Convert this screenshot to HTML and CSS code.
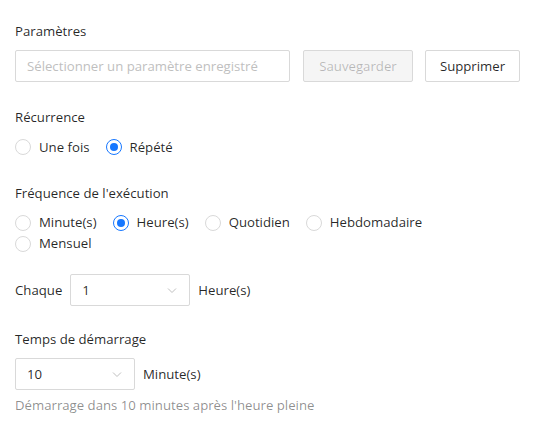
FILE: index.html
```html
<!DOCTYPE html>
<html lang="fr">
<head>
<meta charset="utf-8">
<title>Paramètres</title>
<link rel="stylesheet" href="styles.css">
</head>
<body>
<form class="form">
  <div class="item">
    <div class="label">Paramètres</div>
    <div class="param-row">
      <div class="input placeholder">Sélectionner un paramètre enregistré</div>
      <button type="button" class="btn btn-disabled btn-save">Sauvegarder</button>
      <button type="button" class="btn btn-delete">Supprimer</button>
    </div>
  </div>

  <div class="item">
    <div class="label">Récurrence</div>
    <div class="radio-group">
      <label class="radio"><span class="circle"></span><span class="radio-text">Une fois</span></label>
      <label class="radio"><span class="circle checked"></span><span class="radio-text">Répété</span></label>
    </div>
  </div>

  <div class="item item-freq">
    <div class="label">Fréquence de l'exécution</div>
    <div class="radio-group radio-group-wrap">
      <label class="radio"><span class="circle"></span><span class="radio-text">Minute(s)</span></label>
      <label class="radio"><span class="circle checked"></span><span class="radio-text">Heure(s)</span></label>
      <label class="radio"><span class="circle"></span><span class="radio-text">Quotidien</span></label>
      <label class="radio"><span class="circle"></span><span class="radio-text">Hebdomadaire</span></label>
      <label class="radio"><span class="circle"></span><span class="radio-text">Mensuel</span></label>
    </div>
  </div>

  <div class="item item-every">
    <div class="inline-row">
      <span class="inline-text">Chaque</span>
      <div class="select">
        <span class="select-value">1</span>
        <svg class="arrow" width="12" height="12" viewBox="0 0 12 12"><polyline points="2,4.5 6,8.5 10,4.5" fill="none" stroke="#bfbfbf" stroke-width="1"/></svg>
      </div>
      <span class="inline-text">Heure(s)</span>
    </div>
  </div>

  <div class="item">
    <div class="label">Temps de démarrage</div>
    <div class="inline-row inline-row-start">
      <div class="select">
        <span class="select-value">10</span>
        <svg class="arrow" width="12" height="12" viewBox="0 0 12 12"><polyline points="2,4.5 6,8.5 10,4.5" fill="none" stroke="#bfbfbf" stroke-width="1"/></svg>
      </div>
      <span class="inline-text">Minute(s)</span>
    </div>
    <div class="help">Démarrage dans 10 minutes après l'heure pleine</div>
  </div>
</form>
</body>
</html>
```

FILE: styles.css
```css
* { box-sizing: border-box; }

html, body {
  margin: 0;
  padding: 0;
  background: #ffffff;
}

body {
  font-family: "Open Sans", "Noto Sans", "Liberation Sans", sans-serif;
  font-size: 13.2px;
  color: rgba(0, 0, 0, 0.85);
}

.form {
  width: 505px;
  margin: 0 0 0 15px;
  padding-top: 20px;
}

.item {
  margin-bottom: 24px;
}

.label {
  height: 22px;
  line-height: 22px;
  margin-bottom: 8px;
}

.param-row {
  display: flex;
  align-items: center;
}

.input {
  flex: 1;
  height: 32px;
  line-height: 30px;
  border: 1px solid #d9d9d9;
  border-radius: 2px;
  padding: 0 11px;
  white-space: nowrap;
  overflow: hidden;
}

.placeholder {
  color: #bfbfbf;
}

.btn {
  height: 32px;
  border: 1px solid #d9d9d9;
  border-radius: 2px;
  background: #ffffff;
  font: inherit;
  color: rgba(0, 0, 0, 0.85);
  padding: 0;
  text-align: center;
}

.btn-save {
  width: 110px;
  margin-left: 13px;
}

.btn-delete {
  width: 95px;
  margin-left: 12px;
}

.btn-disabled {
  background: #f5f5f5;
  color: rgba(0, 0, 0, 0.25);
}

.radio-group {
  display: flex;
  flex-wrap: wrap;
  line-height: 22px;
}

.radio-group-wrap {
  line-height: 21px;
}

.radio {
  display: inline-flex;
  align-items: center;
  margin-right: 8px;
}

.circle {
  width: 16px;
  height: 16px;
  border: 1px solid #d9d9d9;
  border-radius: 50%;
  background: #ffffff;
  position: relative;
  flex: none;
}

.circle.checked {
  border-color: #1677ff;
}

.circle.checked::after {
  content: "";
  position: absolute;
  left: 3px;
  top: 3px;
  width: 8px;
  height: 8px;
  border-radius: 50%;
  background: #1677ff;
}

.radio-text {
  padding: 0 8px;
}

.item-freq {
  margin-bottom: 20px;
}

.item-every {
  margin-bottom: 22px;
}

.inline-row {
  display: flex;
  align-items: center;
  gap: 8px;
}

.select {
  width: 120px;
  height: 32px;
  border: 1px solid #d9d9d9;
  border-radius: 2px;
  padding: 0 11px;
  display: flex;
  align-items: center;
  justify-content: space-between;
  background: #ffffff;
}

.select-value {
  line-height: 30px;
}

.arrow {
  display: block;
}

.help {
  margin-top: 4px;
  line-height: 22px;
  color: rgba(0, 0, 0, 0.45);
}
```
